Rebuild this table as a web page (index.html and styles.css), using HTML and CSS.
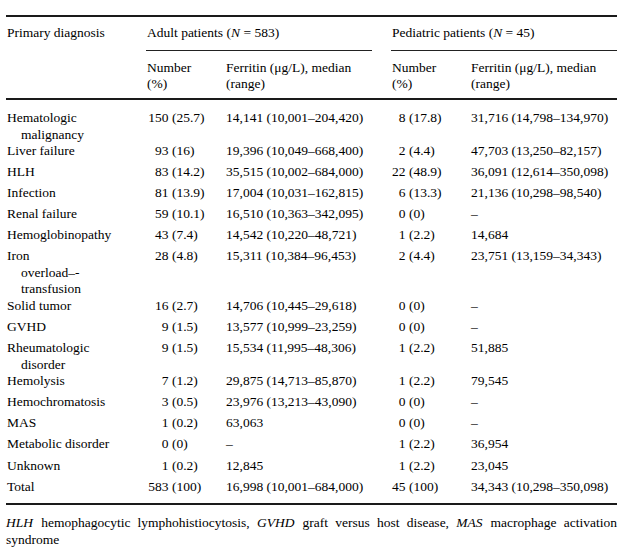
FILE: index.html
```html
<!DOCTYPE html>
<html>
<head>
<meta charset="utf-8">
<link rel="stylesheet" href="styles.css">
</head>
<body>
<div class="page">
  <div class="tbl">
    <div class="head">
      <div class="h-diag">Primary diagnosis</div>
      <div class="h-group h-adult">Adult patients (<i>N</i> = 583)</div>
      <div class="h-group h-ped">Pediatric patients (<i>N</i> = 45)</div>
      <div class="h-sub">Number<br>(%)</div>
      <div class="h-sub">Ferritin (μg/L), median<br>(range)</div>
      <div class="h-sub">Number<br>(%)</div>
      <div class="h-sub">Ferritin (μg/L), median<br>(range)</div>
    </div>
    <div class="body">
      <div class="row"><div class="dx">Hematologic<br>malignancy</div><div class="na"><span class="n">150</span>(25.7)</div><div class="fe">14,141 (10,001–204,420)</div><div class="np"><span class="n">8</span>(17.8)</div><div class="fe">31,716 (14,798–134,970)</div></div>
      <div class="row"><div class="dx">Liver failure</div><div class="na"><span class="n">93</span>(16)</div><div class="fe">19,396 (10,049–668,400)</div><div class="np"><span class="n">2</span>(4.4)</div><div class="fe">47,703 (13,250–82,157)</div></div>
      <div class="row"><div class="dx">HLH</div><div class="na"><span class="n">83</span>(14.2)</div><div class="fe">35,515 (10,002–684,000)</div><div class="np"><span class="n">22</span>(48.9)</div><div class="fe">36,091 (12,614–350,098)</div></div>
      <div class="row"><div class="dx">Infection</div><div class="na"><span class="n">81</span>(13.9)</div><div class="fe">17,004 (10,031–162,815)</div><div class="np"><span class="n">6</span>(13.3)</div><div class="fe">21,136 (10,298–98,540)</div></div>
      <div class="row"><div class="dx">Renal failure</div><div class="na"><span class="n">59</span>(10.1)</div><div class="fe">16,510 (10,363–342,095)</div><div class="np"><span class="n">0</span>(0)</div><div class="fe">–</div></div>
      <div class="row"><div class="dx">Hemoglobinopathy</div><div class="na"><span class="n">43</span>(7.4)</div><div class="fe">14,542 (10,220–48,721)</div><div class="np"><span class="n">1</span>(2.2)</div><div class="fe">14,684</div></div>
      <div class="row"><div class="dx">Iron<br>overload–-<br>transfusion</div><div class="na"><span class="n">28</span>(4.8)</div><div class="fe">15,311 (10,384–96,453)</div><div class="np"><span class="n">2</span>(4.4)</div><div class="fe">23,751 (13,159–34,343)</div></div>
      <div class="row"><div class="dx">Solid tumor</div><div class="na"><span class="n">16</span>(2.7)</div><div class="fe">14,706 (10,445–29,618)</div><div class="np"><span class="n">0</span>(0)</div><div class="fe">–</div></div>
      <div class="row"><div class="dx">GVHD</div><div class="na"><span class="n">9</span>(1.5)</div><div class="fe">13,577 (10,999–23,259)</div><div class="np"><span class="n">0</span>(0)</div><div class="fe">–</div></div>
      <div class="row"><div class="dx">Rheumatologic<br>disorder</div><div class="na"><span class="n">9</span>(1.5)</div><div class="fe">15,534 (11,995–48,306)</div><div class="np"><span class="n">1</span>(2.2)</div><div class="fe">51,885</div></div>
      <div class="row"><div class="dx">Hemolysis</div><div class="na"><span class="n">7</span>(1.2)</div><div class="fe">29,875 (14,713–85,870)</div><div class="np"><span class="n">1</span>(2.2)</div><div class="fe">79,545</div></div>
      <div class="row"><div class="dx">Hemochromatosis</div><div class="na"><span class="n">3</span>(0.5)</div><div class="fe">23,976 (13,213–43,090)</div><div class="np"><span class="n">0</span>(0)</div><div class="fe">–</div></div>
      <div class="row"><div class="dx">MAS</div><div class="na"><span class="n">1</span>(0.2)</div><div class="fe">63,063</div><div class="np"><span class="n">0</span>(0)</div><div class="fe">–</div></div>
      <div class="row"><div class="dx">Metabolic disorder</div><div class="na"><span class="n">0</span>(0)</div><div class="fe">–</div><div class="np"><span class="n">1</span>(2.2)</div><div class="fe">36,954</div></div>
      <div class="row"><div class="dx">Unknown</div><div class="na"><span class="n">1</span>(0.2)</div><div class="fe">12,845</div><div class="np"><span class="n">1</span>(2.2)</div><div class="fe">23,045</div></div>
      <div class="row"><div class="dx">Total</div><div class="na"><span class="n">583</span>(100)</div><div class="fe">16,998 (10,001–684,000)</div><div class="np"><span class="n">45</span>(100)</div><div class="fe">34,343 (10,298–350,098)</div></div>
    </div>
  </div>
  <p class="note"><i class="ab">HLH</i> hemophagocytic lymphohistiocytosis, <i class="ab">GVHD</i> graft versus host disease, <i class="ab">MAS</i> macrophage activation syndrome</p>
</div>
</body>
</html>
```

FILE: styles.css
```css
html, body {
  margin: 0;
  padding: 0;
  background: #fff;
}

.page {
  width: 611px;
  padding: 15px 0 0 6px;
  font-family: "Liberation Serif", "Times New Roman", serif;
  font-size: 13.5px;
  color: #000;
}

.tbl {
  border-top: 2px solid #1a1a1a;
  border-bottom: 2px solid #1a1a1a;
}

.head {
  display: grid;
  grid-template-columns: 140px 79px 166px 79px 147px;
  border-bottom: 2px solid #1a1a1a;
  line-height: 16px;
}

.h-diag {
  grid-row: 1 / span 2;
  grid-column: 1;
  padding: 8px 0 0 1px;
  line-height: 16.5px;
}

.h-group {
  padding: 8px 0 8px 1px;
  border-bottom: 1.5px solid #222;
  line-height: 16.5px;
}

.h-adult {
  grid-column: 2 / span 2;
  margin-right: 19px;
}

.h-ped {
  grid-column: 4 / span 2;
}

.h-sub {
  padding: 9px 0 6px 1px;
}

.body {
  padding: 10.5px 0 3.5px;
}

.row {
  display: grid;
  grid-template-columns: 140px 79px 166px 79px 147px;
  min-height: 21.1px;
  line-height: 16.5px;
  align-items: start;
}

.dx {
  padding-left: 15px;
  text-indent: -14px;
}

.na, .np {
  white-space: nowrap;
}

.n {
  display: inline-block;
  text-align: right;
  margin-right: 3.4px;
}

.na .n {
  width: 22.5px;
}

.np .n {
  width: 13.5px;
  margin-left: 1px;
}

.fe {
  padding-left: 1px;
  white-space: nowrap;
}

.note {
  margin: 9px 0 0;
  line-height: 17px;
  text-align: justify;
}

.ab {
  display: inline-block;
  padding-right: 1px;
}
```
